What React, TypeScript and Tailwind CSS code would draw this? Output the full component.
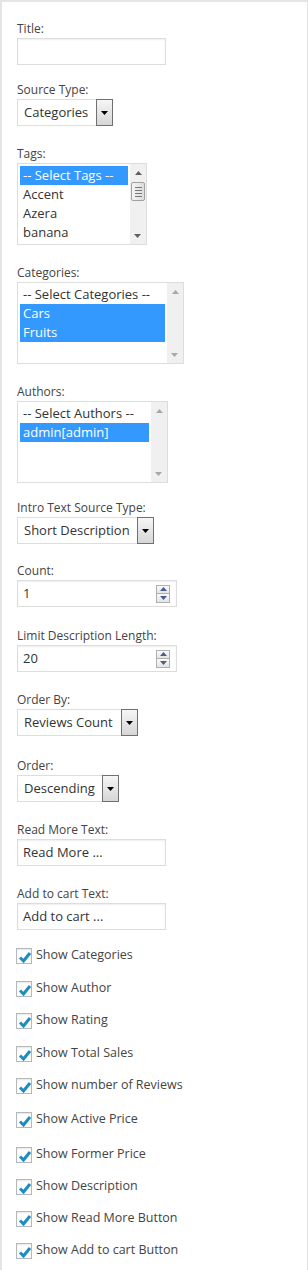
import React from "react";

const FONT = { fontFamily: '"Open Sans", "Noto Sans", sans-serif' };

function Label({ children }: { children: React.ReactNode }) {
  return <div className="text-[12px] leading-[19px] text-[#444]">{children}</div>;
}

function TextInput({ value, w }: { value?: string; w: string }) {
  return (
    <div
      className={`${w} h-[27px] border border-[#ddd] bg-white pl-[5px] flex items-center text-[13px] text-[#333] shadow-[inset_0_1px_2px_rgba(0,0,0,0.07)]`}
    >
      {value}
    </div>
  );
}

function Arrow() {
  return (
    <div className="w-[17px] -my-[1px] -mr-[1px] border border-[#707070] bg-gradient-to-b from-[#f6f6f6] to-[#d6d6d6] flex justify-center pt-[11px]">
      <svg width="7" height="4" viewBox="0 0 7 4">
        <path d="M0 0 H7 L3.5 4 Z" fill="#000" />
      </svg>
    </div>
  );
}

function Select({ value, w }: { value: string; w: string }) {
  return (
    <div className={`${w} h-[27px] border border-[#ddd] bg-white flex text-[13px] text-[#333]`}>
      <div className="flex-1 pl-[6px] flex items-center whitespace-nowrap">{value}</div>
      <Arrow />
    </div>
  );
}

function ScrollArrowUp({ c }: { c: string }) {
  return (
    <svg width="7" height="4" viewBox="0 0 7 4">
      <path d="M3.5 0 L7 4 H0 Z" fill={c} />
    </svg>
  );
}
function ScrollArrowDown({ c }: { c: string }) {
  return (
    <svg width="7" height="4" viewBox="0 0 7 4">
      <path d="M0 0 H7 L3.5 4 Z" fill={c} />
    </svg>
  );
}

function ListBox({
  items,
  selected,
  w,
  thumb,
}: {
  items: string[];
  selected: number[];
  w: string;
  thumb?: boolean;
}) {
  const c = thumb ? "#606060" : "#a8a8a8";
  return (
    <div className={`${w} h-[82px] border border-[#ddd] bg-white flex text-[13px] text-[#333]`}>
      <div className="flex-1 p-[2px] overflow-hidden">
        {items.map((it, i) => (
          <div
            key={i}
            className={`h-[19px] leading-[19px] pl-[3px] whitespace-nowrap ${
              selected.includes(i) ? "bg-[#3399ff] text-white" : ""
            }`}
          >
            {it}
          </div>
        ))}
      </div>
      <div className="w-[16px] bg-[#f0f0f0] flex flex-col items-center relative">
        <div className="mt-[7px]">
          <ScrollArrowUp c={c} />
        </div>
        {thumb && (
          <div className="mt-[7px] w-[14px] h-[19px] border border-[#a0a0a0] rounded-[2px] bg-gradient-to-r from-[#f4f4f4] to-[#dcdcdc] flex flex-col items-center justify-center gap-[2px]">
            <div className="w-[7px] h-[1px] bg-[#777]" />
            <div className="w-[7px] h-[1px] bg-[#777]" />
            <div className="w-[7px] h-[1px] bg-[#777]" />
            <div className="w-[7px] h-[1px] bg-[#777]" />
          </div>
        )}
        <div className="absolute bottom-[6px] left-[4px]">
          <ScrollArrowDown c={c} />
        </div>
      </div>
    </div>
  );
}

function NumberInput({ value }: { value: string }) {
  return (
    <div className="w-[160px] h-[27px] border border-[#ddd] bg-white flex items-center text-[13px] text-[#333] shadow-[inset_0_1px_2px_rgba(0,0,0,0.07)]">
      <div className="flex-1 pl-[5px]">{value}</div>
      <div className="w-[14px] h-[18px] mr-[6px] flex flex-col">
        <div className="flex-1 border border-[#b0b0b0] bg-gradient-to-b from-[#fafafa] to-[#e4e4e4] flex items-center justify-center">
          <svg width="7" height="4" viewBox="0 0 7 4">
            <path d="M3.5 0 L7 4 H0 Z" fill="#4c5b94" />
          </svg>
        </div>
        <div className="flex-1 border border-t-0 border-[#b0b0b0] bg-gradient-to-b from-[#fafafa] to-[#e4e4e4] flex items-center justify-center">
          <svg width="7" height="4" viewBox="0 0 7 4">
            <path d="M0 0 H7 L3.5 4 Z" fill="#4c5b94" />
          </svg>
        </div>
      </div>
    </div>
  );
}

function Check({ label, mt }: { label: string; mt: string }) {
  return (
    <div className={`${mt} flex items-center -ml-[1px]`}>
      <div className="w-[16px] h-[16px] border border-[#b4b9be] bg-white shadow-[inset_0_1px_2px_rgba(0,0,0,0.1)] relative shrink-0">
        <svg className="absolute -left-[1px] -top-[1px]" width="18" height="18" viewBox="0 0 18 18">
          <path d="M4 9.5 L7.5 13 L14 5" fill="none" stroke="#1e8cbe" strokeWidth="3" strokeLinecap="butt" strokeLinejoin="miter" />
        </svg>
      </div>
      <span className="ml-[4px] text-[12.5px] leading-[16px] -mt-[3px] text-[#444] whitespace-nowrap">{label}</span>
    </div>
  );
}

export default function App() {
  return (
    <div style={FONT} className="w-[308px] h-[1270px] bg-white overflow-hidden">
      <div className="h-[1290px] border-t-2 border-l-2 border-r border-[#e5e5e5] pl-[15px] pt-[17px]">
        <div>
          <Label>Title:</Label>
          <TextInput w="w-[149px]" />
        </div>
        <div className="mt-[15px]">
          <Label>Source Type:</Label>
          <Select value="Categories" w="w-[96px]" />
        </div>
        <div className="mt-[18px]">
          <Label>Tags:</Label>
          <ListBox
            w="w-[130px]"
            items={["-- Select Tags --", "Accent", "Azera", "banana"]}
            selected={[0]}
            thumb
          />
        </div>
        <div className="mt-[18px]">
          <Label>Categories:</Label>
          <ListBox w="w-[167px]" items={["-- Select Categories --", "Cars", "Fruits"]} selected={[1, 2]} />
        </div>
        <div className="mt-[18px]">
          <Label>Authors:</Label>
          <ListBox w="w-[151px]" items={["-- Select Authors --", "admin[admin]"]} selected={[1]} />
        </div>
        <div className="mt-[15px]">
          <Label>Intro Text Source Type:</Label>
          <Select value="Short Description" w="w-[137px]" />
        </div>
        <div className="mt-[17px]">
          <Label>Count:</Label>
          <NumberInput value="1" />
        </div>
        <div className="mt-[19px]">
          <Label>Limit Description Length:</Label>
          <NumberInput value="20" />
        </div>
        <div className="mt-[18px]">
          <Label>Order By:</Label>
          <Select value="Reviews Count" w="w-[121px]" />
        </div>
        <div className="mt-[20px]">
          <Label>Order:</Label>
          <Select value="Descending" w="w-[102px]" />
        </div>
        <div className="mt-[18px]">
          <Label>Read More Text:</Label>
          <TextInput w="w-[149px]" value="Read More ..." />
        </div>
        <div className="mt-[18px]">
          <Label>Add to cart Text:</Label>
          <TextInput w="w-[149px]" value="Add to cart ..." />
        </div>
        <Check mt="mt-[18px]" label="Show Categories" />
        <Check mt="mt-[17px]" label="Show Author" />
        <Check mt="mt-[16px]" label="Show Rating" />
        <Check mt="mt-[17px]" label="Show Total Sales" />
        <Check mt="mt-[16px]" label="Show number of Reviews" />
        <Check mt="mt-[18px]" label="Show Active Price" />
        <Check mt="mt-[19px]" label="Show Former Price" />
        <Check mt="mt-[16px]" label="Show Description" />
        <Check mt="mt-[16px]" label="Show Read More Button" />
        <Check mt="mt-[16px]" label="Show Add to cart Button" />
      </div>
    </div>
  );
}
